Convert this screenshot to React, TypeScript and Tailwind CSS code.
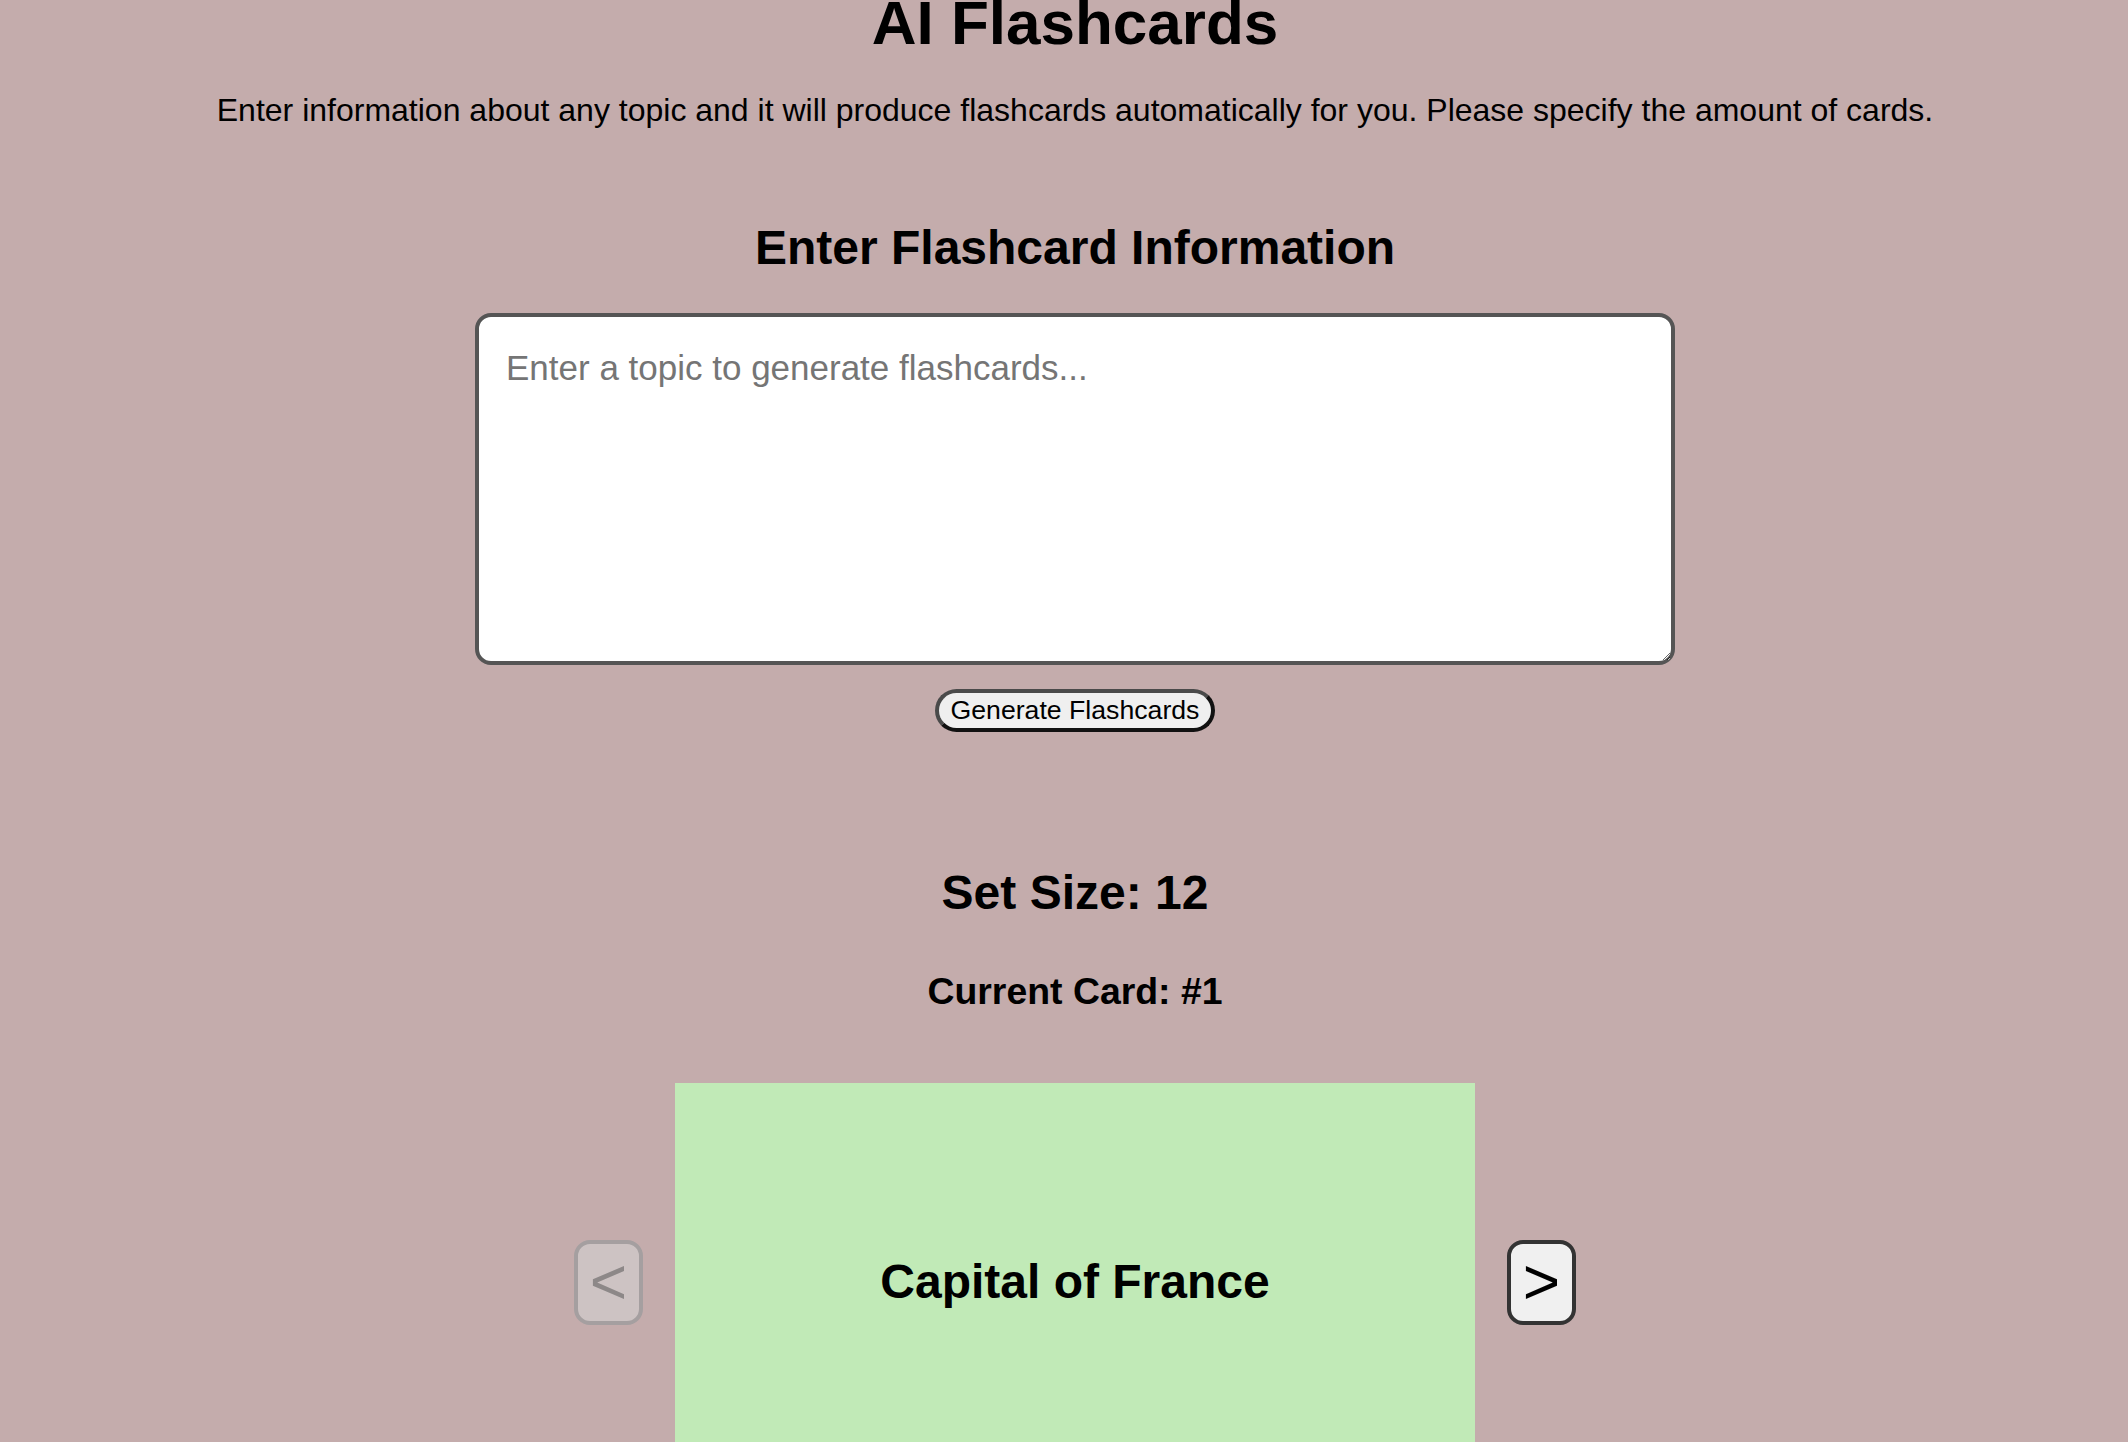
import { useState } from "react";

const cards = [
  { front: "Capital of France", back: "Paris" },
  { front: "Capital of Spain", back: "Madrid" },
  { front: "Capital of Italy", back: "Rome" },
  { front: "Capital of Germany", back: "Berlin" },
  { front: "Capital of Portugal", back: "Lisbon" },
  { front: "Capital of Austria", back: "Vienna" },
  { front: "Capital of Greece", back: "Athens" },
  { front: "Capital of Poland", back: "Warsaw" },
  { front: "Capital of Norway", back: "Oslo" },
  { front: "Capital of Sweden", back: "Stockholm" },
  { front: "Capital of Finland", back: "Helsinki" },
  { front: "Capital of Ireland", back: "Dublin" },
];

const App = () => {
  const [topic, setTopic] = useState("");
  const [index, setIndex] = useState(0);
  const [flipped, setFlipped] = useState(false);

  const card = cards[index];

  const go = (step: number) => {
    setIndex((i) => Math.min(cards.length - 1, Math.max(0, i + step)));
    setFlipped(false);
  };

  return (
    <div className="min-h-screen overflow-hidden bg-[#c4acac] text-black font-['Liberation_Sans',Arial,sans-serif]">
      <div className="flex flex-col items-center text-center pl-[22px]">
        <h1 className="mt-[-13px] text-[62px] leading-[72px] font-bold">
          AI Flashcards
        </h1>
        <p className="mt-[33px] text-[32px] leading-[36px]">
          Enter information about any topic and it will produce flashcards
          automatically for you. Please specify the amount of cards.
        </p>

        <h2 className="mt-[92px] text-[48px] leading-[56px] font-bold">
          Enter Flashcard Information
        </h2>
        <textarea
          value={topic}
          onChange={(e) => setTopic(e.target.value)}
          placeholder="Enter a topic to generate flashcards..."
          className="mt-[37px] w-[1200px] h-[352px] bg-white border-4 border-[#555555] rounded-2xl pl-[27px] pr-6 pt-[31px] text-[35px] leading-[40px] placeholder:text-[#757575] outline-none"
        />
        <button className="mt-[24px] h-[43px] px-[12px] bg-[#efefef] border-4 border-t-[#4a4a4a] border-l-[#4a4a4a] border-b-[#111111] border-r-[#111111] rounded-full text-[26.67px] leading-[31px]">
          Generate Flashcards
        </button>

        <h2 className="mt-[133px] text-[48px] leading-[56px] font-bold">
          Set Size: {cards.length}
        </h2>
        <h3 className="mt-[48px] text-[37.4px] leading-[44px] font-bold">
          Current Card: #{index + 1}
        </h3>

        <div className="mt-[70px] flex items-start gap-8">
          <div className="h-[398px] flex items-center">
            <button
              disabled={index === 0}
              onClick={() => go(-1)}
              className="w-[69px] h-[85px] rounded-2xl border-4 border-[#333333] bg-[#f0f0f0] text-[64px] leading-[72px] disabled:bg-[#cdc3c3] disabled:border-[#a59fa0] disabled:text-[#8d8888]"
            >
              &lt;
            </button>
          </div>
          <div
            onClick={() => setFlipped((f) => !f)}
            className="w-[800px] h-[700px] bg-[#c1eab7] cursor-pointer"
          >
            <div className="h-[398px] flex items-center justify-center text-[48px] leading-[56px] font-bold">
              {flipped ? card.back : card.front}
            </div>
          </div>
          <div className="h-[398px] flex items-center">
            <button
              disabled={index === cards.length - 1}
              onClick={() => go(1)}
              className="w-[69px] h-[85px] rounded-2xl border-4 border-[#333333] bg-[#f0f0f0] text-[64px] leading-[72px] disabled:bg-[#cdc3c3] disabled:border-[#a59fa0] disabled:text-[#8d8888]"
            >
              &gt;
            </button>
          </div>
        </div>
      </div>
    </div>
  );
};

export default App;
